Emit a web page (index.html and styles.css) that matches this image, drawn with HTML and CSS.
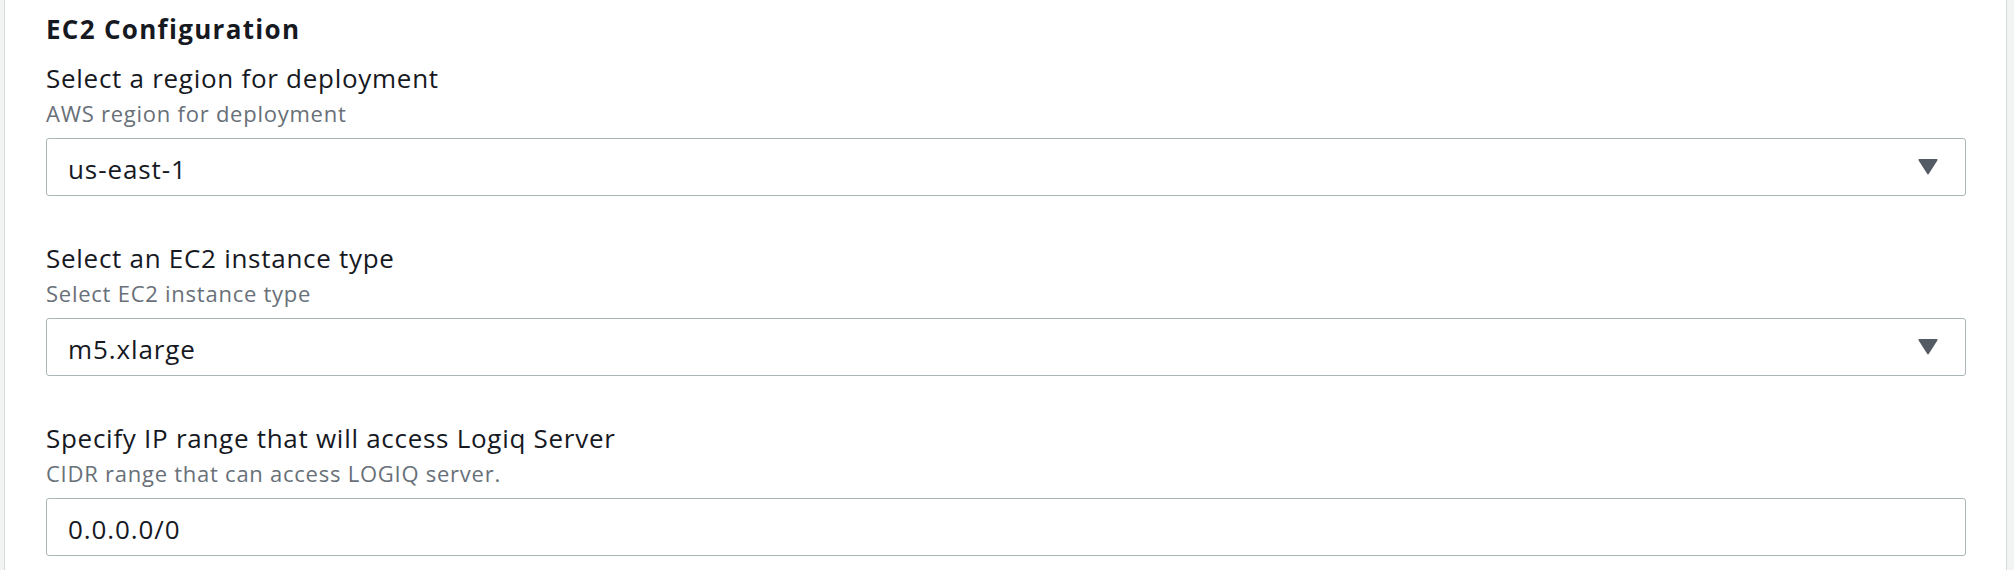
FILE: index.html
```html
<!DOCTYPE html>
<html lang="en">
<head>
<meta charset="utf-8">
<title>EC2 Configuration</title>
<link rel="stylesheet" href="styles.css">
</head>
<body>
<div class="card">
  <h2 class="title">EC2 Configuration</h2>
  <div class="fields">
    <div class="field">
      <div class="label">Select a region for deployment</div>
      <div class="desc">AWS region for deployment</div>
      <div class="control select">
        <span class="value">us-east-1</span>
        <svg class="caret" width="20" height="17" viewBox="0 0 20 17"><path d="M1.5 1h17a1 1 0 0 1 .85 1.5l-8.5 13.2a1 1 0 0 1-1.7 0L0.65 2.5A1 1 0 0 1 1.5 1z" fill="#545b64"/></svg>
      </div>
    </div>
    <div class="field">
      <div class="label">Select an EC2 instance type</div>
      <div class="desc">Select EC2 instance type</div>
      <div class="control select">
        <span class="value">m5.xlarge</span>
        <svg class="caret" width="20" height="17" viewBox="0 0 20 17"><path d="M1.5 1h17a1 1 0 0 1 .85 1.5l-8.5 13.2a1 1 0 0 1-1.7 0L0.65 2.5A1 1 0 0 1 1.5 1z" fill="#545b64"/></svg>
      </div>
    </div>
    <div class="field">
      <div class="label">Specify IP range that will access Logiq Server</div>
      <div class="desc">CIDR range that can access LOGIQ server.</div>
      <div class="control">
        <span class="value">0.0.0.0/0</span>
      </div>
    </div>
  </div>
</div>
</body>
</html>
```
FILE: styles.css
```css
html, body {
  margin: 0;
  padding: 0;
}
body {
  background: #f2f3f3;
  font-family: "Open Sans", "Noto Sans", "Liberation Sans", sans-serif;
  color: #16191f;
}
.card {
  margin: 0 7px 0 4px;
  min-height: 100vh;
  box-sizing: border-box;
  background: #ffffff;
  border-left: 1px solid #d5dbdb;
  border-right: 1px solid #d5dbdb;
  padding: 13px 40px 0 41px;
}
.title {
  margin: 0;
  font-size: 26px;
  line-height: 32px;
  font-weight: 700;
  letter-spacing: 1.3px;
}
.fields {
  display: flex;
  flex-direction: column;
  gap: 46px;
  margin-top: 17px;
}
.field {
  display: flex;
  flex-direction: column;
}
.label {
  font-size: 26px;
  line-height: 32px;
  letter-spacing: 0.72px;
}
.desc {
  margin-top: 5px;
  font-size: 22px;
  line-height: 28px;
  color: #687078;
  letter-spacing: 0.75px;
}
.control {
  margin-top: 11px;
  height: 58px;
  box-sizing: border-box;
  border: 1px solid #aab7b8;
  border-radius: 3px;
  padding: 14px 27px 0 21px;
  display: flex;
  justify-content: space-between;
  align-items: flex-start;
}
.value {
  font-size: 26px;
  line-height: 32px;
  letter-spacing: 0.9px;
}
.caret {
  display: block;
  margin-top: 5px;
}
```
